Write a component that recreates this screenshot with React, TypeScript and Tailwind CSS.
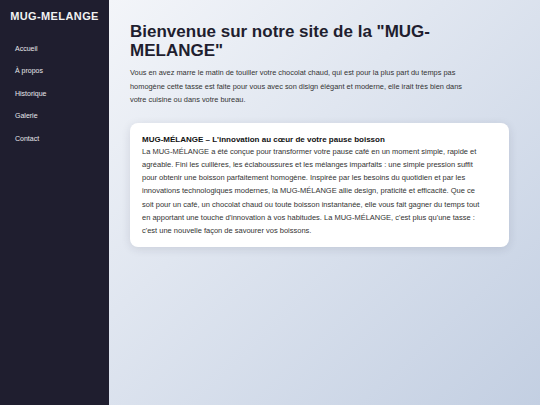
export default function App() {
  const links = ["Accueil", "À propos", "Historique", "Galerie", "Contact"];
  return (
    <div
      className="flex min-h-screen w-full"
      style={{ fontFamily: '"Liberation Sans", Arial, sans-serif' }}
    >
      <aside className="w-[109px] shrink-0 bg-[#1f1e2f] text-white">
        <div className="pt-[9px] text-center text-[11px] font-bold leading-[14px] tracking-[0.4px] text-[#f2f2f2]">
          MUG-MELANGE
        </div>
        <nav className="mt-[21px] flex flex-col gap-[12.4px] pl-[15px]">
          {links.map((l) => (
            <a key={l} className="block text-[7px] leading-[10px] text-[#e8e8ec]">
              {l}
            </a>
          ))}
        </nav>
      </aside>
      <main className="flex-1 bg-gradient-to-br from-[#f3f5f9] to-[#c3cfe2] pl-[21px] pr-[30px] pt-[23px]">
        <h1 className="text-[17px] font-bold leading-[18.5px] text-[#1f1e2f]">
          Bienvenue sur notre site de la "MUG-MELANGE"
        </h1>
        <p className="mt-[6px] max-w-[335px] text-[7.4px] leading-[13.5px] text-[#333]">
          Vous en avez marre le matin de touiller votre chocolat chaud, qui est pour la plus part du temps pas homogène cette tasse est faite pour vous avec son disign élégant et moderne, elle irait très bien dans votre cuisine ou dans votre bureau.
        </p>
        <div className="mt-[16px] w-[379px] rounded-[8px] bg-white px-[12px] pb-[9px] pt-[12px] shadow-[0_2px_10px_rgba(30,30,60,0.12)]">
          <h2 className="text-[8px] font-bold leading-[10px] text-[#111]">
            MUG-MÉLANGE – L'innovation au cœur de votre pause boisson
          </h2>
          <p className="pr-[12px] text-[7.5px] leading-[13.3px] text-[#333]">
            La MUG-MÉLANGE a été conçue pour transformer votre pause café en un moment simple, rapide et agréable. Fini les cuillères, les éclaboussures et les mélanges imparfaits : une simple pression suffit pour obtenir une boisson parfaitement homogène. Inspirée par les besoins du quotidien et par les innovations technologiques modernes, la MUG-MÉLANGE allie design, praticité et efficacité. Que ce soit pour un café, un chocolat chaud ou toute boisson instantanée, elle vous fait gagner du temps tout en apportant une touche d'innovation à vos habitudes. La MUG-MÉLANGE, c'est plus qu'une tasse : c'est une nouvelle façon de savourer vos boissons.
          </p>
        </div>
      </main>
    </div>
  );
}
